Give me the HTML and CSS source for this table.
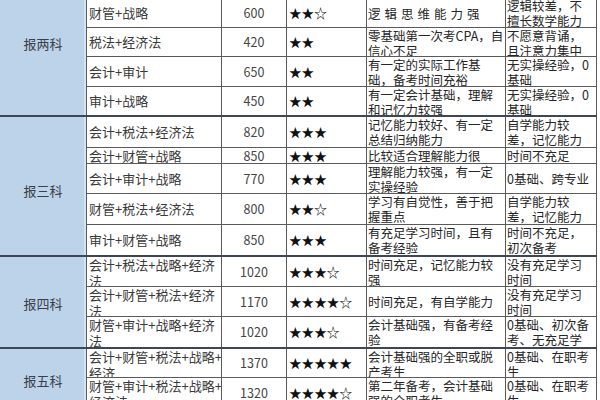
FILE: index.html
```html
<!DOCTYPE html>
<html lang="zh-CN">
<head>
<meta charset="utf-8">
<title>CPA 报考科目搭配</title>
<link rel="stylesheet" href="styles.css">
</head>
<body>
<div class="viewport">
  <div class="sheet">
    <div class="group g1">
      <div class="label">报两科</div>
      <div class="c name"><span>会计+财管</span></div>
      <div class="c num"><span>870</span></div>
      <div class="c stars"><span>★★★</span></div>
      <div class="c txt"><span>有一定会计基础，逻辑<br>思维能力强</span></div>
      <div class="c txt"><span>基础薄弱</span></div>

      <div class="c name"><span>财管+战略</span></div>
      <div class="c num"><span>600</span></div>
      <div class="c stars"><span>★★☆</span></div>
      <div class="c txt"><span class="spread">逻辑思维能力强</span></div>
      <div class="c txt mid"><span>逻辑较差，不<br>擅长数学能力</span></div>

      <div class="c name"><span>税法+经济法</span></div>
      <div class="c num"><span>420</span></div>
      <div class="c stars"><span>★★</span></div>
      <div class="c txt"><span>零基础第一次考CPA，自<br>信心不足</span></div>
      <div class="c txt"><span>不愿意背诵，<br>且注意力集中</span></div>

      <div class="c name"><span>会计+审计</span></div>
      <div class="c num"><span>650</span></div>
      <div class="c stars"><span>★★</span></div>
      <div class="c txt"><span>有一定的实际工作基<br>础，备考时间充裕</span></div>
      <div class="c txt"><span>无实操经验，0<br>基础</span></div>

      <div class="c name"><span>审计+战略</span></div>
      <div class="c num"><span>450</span></div>
      <div class="c stars"><span>★★</span></div>
      <div class="c txt"><span>有一定会计基础，理解<br>和记忆力较强</span></div>
      <div class="c txt"><span>无实操经验，0<br>基础</span></div>
    </div>

    <div class="group g2">
      <div class="label">报三科</div>
      <div class="c name"><span>会计+税法+经济法</span></div>
      <div class="c num"><span>820</span></div>
      <div class="c stars"><span>★★★</span></div>
      <div class="c txt"><span>记忆能力较好、有一定<br>总结归纳能力</span></div>
      <div class="c txt"><span>自学能力较<br>差，记忆能力</span></div>

      <div class="c name"><span>会计+财管+战略</span></div>
      <div class="c num"><span>850</span></div>
      <div class="c stars"><span>★★★</span></div>
      <div class="c txt"><span>比较适合理解能力很</span></div>
      <div class="c txt"><span>时间不充足</span></div>

      <div class="c name"><span>会计+审计+战略</span></div>
      <div class="c num"><span>770</span></div>
      <div class="c stars"><span>★★★</span></div>
      <div class="c txt"><span>理解能力较强，有一定<br>实操经验</span></div>
      <div class="c txt"><span>0基础、跨专业</span></div>

      <div class="c name"><span>财管+税法+经济法</span></div>
      <div class="c num"><span>800</span></div>
      <div class="c stars"><span>★★☆</span></div>
      <div class="c txt"><span>学习有自觉性，善于把<br>握重点</span></div>
      <div class="c txt"><span>自学能力较<br>差，记忆能力</span></div>

      <div class="c name"><span>审计+财管+战略</span></div>
      <div class="c num"><span>850</span></div>
      <div class="c stars"><span>★★★</span></div>
      <div class="c txt"><span>有充足学习时间，且有<br>备考经验</span></div>
      <div class="c txt"><span>时间不充足，<br>初次备考</span></div>
    </div>

    <div class="group g3">
      <div class="label">报四科</div>
      <div class="c name"><span>会计+税法+战略+经济<br>法</span></div>
      <div class="c num"><span>1020</span></div>
      <div class="c stars"><span>★★★☆</span></div>
      <div class="c txt"><span>时间充足，记忆能力较<br>强</span></div>
      <div class="c txt"><span>没有充足学习<br>时间</span></div>

      <div class="c name"><span>会计+财管+税法+经济<br>法</span></div>
      <div class="c num"><span>1170</span></div>
      <div class="c stars"><span>★★★★☆</span></div>
      <div class="c txt"><span>时间充足，有自学能力</span></div>
      <div class="c txt"><span>没有充足学习<br>时间</span></div>

      <div class="c name"><span>财管+审计+战略+经济<br>法</span></div>
      <div class="c num"><span>1020</span></div>
      <div class="c stars"><span>★★★☆</span></div>
      <div class="c txt"><span>会计基础强，有备考经<br>验</span></div>
      <div class="c txt"><span>0基础、初次备<br>考、无充足学<br>习时间</span></div>
    </div>

    <div class="group g4">
      <div class="label">报五科</div>
      <div class="c name"><span>会计+财管+税法+战略+<br>经济</span></div>
      <div class="c num"><span>1370</span></div>
      <div class="c stars"><span>★★★★★</span></div>
      <div class="c txt"><span>会计基础强的全职或脱<br>产考生</span></div>
      <div class="c txt"><span>0基础、在职考<br>生</span></div>

      <div class="c name"><span>财管+审计+税法+战略+<br>经济法</span></div>
      <div class="c num"><span>1320</span></div>
      <div class="c stars"><span>★★★★☆</span></div>
      <div class="c txt"><span>第二年备考，会计基础<br>强的全职考生</span></div>
      <div class="c txt"><span>0基础、在职考<br>生</span></div>
    </div>
  </div>
</div>
</body>
</html>
```

FILE: styles.css
```css
html, body {
  margin: 0;
  padding: 0;
  background: #ffffff;
}

.viewport {
  width: 600px;
  height: 400px;
  overflow: hidden;
  background: #ffffff;
}

.sheet {
  display: flex;
  flex-direction: column;
  gap: 2px;
  width: 597px;
  margin-top: -31px;
  background: #3c4654;
  padding-bottom: 2px;
}

.group {
  display: grid;
  grid-template-columns: 86px 134px 64px 79px 138px 90px;
  column-gap: 1px;
  row-gap: 1px;
  padding-right: 1px;
  background: #5a5a5a;
}

.g1 { grid-template-rows: 29px 28px 28px 29px 28px; }
.g2 { grid-template-rows: 30px 15px 29px 30px 30px; }
.g3 { grid-template-rows: 29px 29px 30px; }
.g4 { grid-template-rows: 28px 30px; }

.label {
  grid-row: 1 / -1;
  grid-column: 1;
  background: #bcd3ea;
  box-shadow: inset -2px 0 0 #d3e3f3;
  display: flex;
  align-items: center;
  justify-content: center;
  font-family: "Noto Sans CJK SC", "Noto Sans", sans-serif;
  font-size: 13px;
  color: #3a3f48;
  padding-top: 3px;
  box-sizing: border-box;
}

.g2 .label {
  padding-top: 9px;
}

.c {
  background: #ffffff;
  overflow: hidden;
  display: flex;
  flex-direction: column;
  justify-content: safe center;
  white-space: nowrap;
  min-height: 0;
}

.c.mid {
  justify-content: center;
}

.name {
  font-family: "Noto Sans CJK SC", "Noto Sans", sans-serif;
  font-size: 13px;
  line-height: 16px;
  color: #3a3a3a;
  padding-left: 2px;
}

.num {
  font-family: "Noto Sans CJK SC", "Noto Sans", sans-serif;
  font-size: 12.5px;
  line-height: 16px;
  color: #444444;
  align-items: center;
}

.stars {
  font-family: "Noto Sans CJK SC", "DejaVu Sans", sans-serif;
  font-size: 12.6px;
  line-height: 16px;
  color: #111111;
  padding-left: 2px;
}

.txt {
  font-family: "Noto Sans CJK SC", "Noto Sans", sans-serif;
  font-size: 12.5px;
  line-height: 15px;
  color: #262626;
  padding-left: 1px;
}

.spread {
  letter-spacing: 4px;
}
```
